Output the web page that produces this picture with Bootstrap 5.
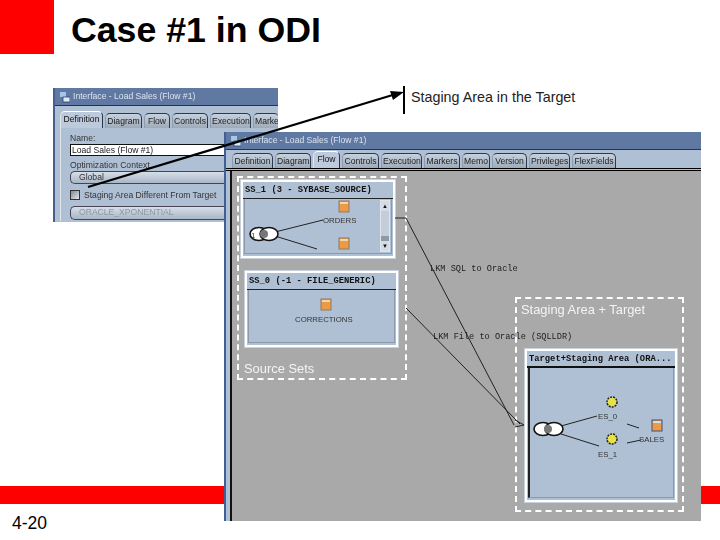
<!DOCTYPE html>
<html lang="en"><head><meta charset="utf-8"><title>Case #1 in ODI</title>
<link href="https://cdn.jsdelivr.net/npm/bootstrap@5.3.0/dist/css/bootstrap.min.css" rel="stylesheet">
<style>
html,body{margin:0;background:#fff;overflow:hidden}
.slide{position:relative;width:720px;height:540px;overflow:hidden;font-family:"Liberation Sans",Arial,sans-serif;color:#000}
.redsq{position:absolute;left:0;top:0;width:54px;height:54px;background:#f00}
.ttl{position:absolute;left:71px;top:10px;margin:0;font:700 35.7px/40px "Liberation Sans",sans-serif}
.redbar{position:absolute;left:0;top:486px;width:720px;height:18px;background:#f00}
.pgno{position:absolute;left:12px;top:512px;font-size:17.5px;line-height:22px}
.callout{position:absolute;left:411px;top:89px;font-size:14.3px;line-height:16px;color:#222}
.win{position:absolute;background:#b0c0d4;overflow:hidden;font-size:8.6px;line-height:12px;color:#333;filter:blur(.4px)}
.win-back{left:53px;top:88px;width:225px;height:134px;border-left:2px solid #465f8d}
.win-front{left:224px;top:132px;width:477px;height:389px;border-left:2px solid #3f5f96}
.tbar{height:18px;background:#6079a3;border-bottom:1px solid #20345a;color:#dbe3ee;padding-left:5px;line-height:17px;white-space:nowrap;font-size:8.6px;display:flex;align-items:center;gap:3px}
.tabstrip{display:flex;align-items:flex-end;gap:2px;white-space:nowrap}
.win-front .tabstrip{padding-left:6px;height:18px;border-bottom:3px double #000;box-sizing:content-box}
.win-back .tabstrip{padding-left:5px;height:22px}
.tabx{height:15px;padding:0 1px;line-height:14px;text-align:center;background:linear-gradient(#c6d1de,#9eaab8);border:1px solid #2b3a4f;border-bottom:0;border-radius:5px 5px 0 0;border-left-color:#8d9bad;color:#222;flex:none;overflow:hidden}
.tabx.on{background:#bccadb;height:17px;border-color:#fff #26384f transparent #dfe6ee;color:#111}
.formx{padding:4px 9px 0;display:flex;flex-direction:column;position:relative;height:93px;border-left:1px solid #dfe6ee;margin-left:5px}
.txtfield{height:12px;width:180px;background:#fff;border:1px solid #111;line-height:10px;padding-left:1px;color:#222;flex:none}
.pill{height:13px;width:180px;background:linear-gradient(#d7dfe8,#a9b6c6);border:1px solid #445;border-right:0;border-radius:5px 0 0 5px;padding-left:8px;line-height:11px;flex:none}
.gapa{margin-top:3px}.gapb{margin-top:5px}
.chk{width:10px;height:10px;flex:none;background:linear-gradient(135deg,#7f8894,#e4e8ed);border:1px solid #333}
.canvasx{position:relative;background:#a9a9a9;height:350px;margin-left:4px;border-left:2px solid #111}
.dashbox{position:absolute;border:2px dashed #fff}
.dash-src{left:5px;top:5px;width:170px;height:204px}
.dash-stg{left:283px;top:126px;width:169px;height:215px}
.lbl-w{position:absolute;color:#f4f4f4;font-size:12.9px;line-height:14px;white-space:nowrap}
.panelx{position:absolute;background:#b0c0d4;border:2px solid #fff;outline:1px solid #c8d2de}
.pan-h{height:17px;font:700 8.8px/17px "Liberation Mono",monospace;color:#111;padding-left:2px;white-space:nowrap;overflow:hidden;border-bottom:1px solid #222}
.pan-b{position:relative;height:calc(100% - 19px);background:#b0c0d4;border:1px solid #8b99aa;border-top:0;margin:0 1px;overflow:hidden}
.scrollx{position:absolute;right:1px;top:1px;bottom:1px;width:10px;background:#8e99a6;border:1px solid #dfe5ec}
.thumbx{position:absolute;left:0;right:0;top:10px;height:25px;background:#c4ced9}
.arrowx{position:absolute;left:0;right:0;height:10px;background:#d3dbe4;color:#111;font-size:6px;line-height:10px;text-align:center}
.nodet{position:absolute;font-size:7.8px;line-height:10px;color:#333;white-space:nowrap}
.lkm{position:absolute;font:8.6px/10px "Liberation Mono",monospace;color:#222;white-space:nowrap}
.ovl{position:absolute;left:0;top:0;pointer-events:none}
.dgm{position:absolute;overflow:visible}
</style></head><body>
<div class="slide">
  <div class="redbar"></div>
  <div class="redsq"></div>
  <h1 class="ttl">Case #1 in ODI</h1>
  <div class="pgno">4-20</div>
  <div class="callout">Staging Area in the Target</div>

  <div class="win win-back">
    <div class="tbar"><svg width="10" height="12" viewBox="0 0 10 12"><rect x="0" y="1" width="6" height="5" fill="#a8c4e6"/><rect x="3" y="6" width="7" height="5" fill="#dfe8f3" stroke="#27456f" stroke-width=".8"/></svg><span>Interface - Load Sales (Flow #1)</span></div>
    <div class="tabstrip">
      <div class="tabx on" style="width:43px">Definition</div><div class="tabx" style="width:37px">Diagram</div><div class="tabx" style="width:26px">Flow</div><div class="tabx" style="width:36px">Controls</div><div class="tabx" style="width:41px">Execution</div><div class="tabx" style="width:26px;border-right:0">Marke</div>
    </div>
    <div class="formx">
      <div>Name:</div>
      <div class="txtfield">Load Sales (Flow #1)</div>
      <div class="gapa">Optimization Context</div>
      <div class="pill">Global</div>
      <div class="d-flex align-items-center gap-1 gapb"><span class="chk"></span><span class="text-nowrap">Staging Area Different From Target</span></div>
      <div class="pill gapb" style="height:14px;color:#8b97a6">ORACLE_XPONENTIAL</div>
    </div>
  </div>

  <div class="win win-front">
    <div class="tbar"><svg width="10" height="12" viewBox="0 0 10 12"><rect x="0" y="1" width="6" height="5" fill="#a8c4e6"/><rect x="3" y="6" width="7" height="5" fill="#dfe8f3" stroke="#27456f" stroke-width=".8"/></svg><span>Interface - Load Sales (Flow #1)</span></div>
    <div class="tabstrip">
      <div class="tabx" style="width:41px">Definition</div><div class="tabx" style="width:36px">Diagram</div><div class="tabx on" style="width:27px">Flow</div><div class="tabx" style="width:37px">Controls</div><div class="tabx" style="width:41px">Execution</div><div class="tabx" style="width:36px">Markers</div><div class="tabx" style="width:28px">Memo</div><div class="tabx" style="width:35px">Version</div><div class="tabx" style="width:41px">Privileges</div><div class="tabx" style="width:44px">FlexFields</div>
    </div>
    <div class="canvasx">
      <div class="panelx" style="left:9px;top:9px;width:154px;height:78px">
        <div class="pan-h">SS_1 (3 - SYBASE_SOURCE)</div>
        <div class="pan-b">
          <svg class="dgm" style="left:0;top:0" width="150" height="60" viewBox="0 0 150 60">
            <path d="M30 33 78 21M30 37 72 50" stroke="#222" fill="none"/>
            <rect x="94" y="2" width="10" height="11" fill="#ee9a45" stroke="#8a7a66"/><rect x="95" y="3" width="8" height="2" fill="#f6d6a8"/>
            <rect x="94" y="39" width="10" height="11" fill="#ee9a45" stroke="#8a7a66"/><rect x="95" y="40" width="8" height="2" fill="#f6d6a8"/>
            <ellipse cx="14" cy="35" rx="9" ry="6.5" fill="#fff" stroke="#111" stroke-width="1.6"/><ellipse cx="24" cy="35" rx="9" ry="6.5" fill="#fff" stroke="#111" stroke-width="1.6"/><circle cx="19" cy="35" r="4" fill="#777"/>
          </svg>
          <div class="nodet" style="left:78px;top:17px">ORDERS</div>
          <div class="nodet" style="left:6px;top:32px">1</div>
          <div class="scrollx"><div class="arrowx" style="top:0">▲</div><div class="thumbx"></div><div class="arrowx" style="bottom:0">▼</div></div>
        </div>
      </div>
      <div class="panelx" style="left:13px;top:100px;width:153px;height:76px">
        <div class="pan-h">SS_0 (-1 - FILE_GENERIC)</div>
        <div class="pan-b">
          <svg class="dgm" style="left:0;top:0" width="150" height="50" viewBox="0 0 150 50">
            <rect x="72" y="9" width="10" height="11" fill="#ee9a45" stroke="#8a7a66"/><rect x="73" y="10" width="8" height="2" fill="#f6d6a8"/>
          </svg>
          <div class="nodet" style="left:46px;top:25px">CORRECTIONS</div>
        </div>
      </div>
      <div class="dashbox dash-src"></div>
      <div class="lbl-w" style="left:12px;top:191px">Source Sets</div>
      <div class="lkm" style="left:198px;top:93px">LKM SQL to Oracle</div>
      <div class="lkm" style="left:201px;top:161px">LKM File to Oracle (SQLLDR)</div>
      <div class="dashbox dash-stg"></div>
      <div class="lbl-w" style="left:289px;top:132px">Staging Area + Target</div>
      <div class="panelx" style="left:293px;top:178px;width:152px;height:153px">
        <div class="pan-h" style="border-bottom:2px solid #111">Target+Staging Area (ORA...</div>
        <div class="pan-b" style="border-left:2px solid #222">
          <svg class="dgm" style="left:0;top:0" width="148" height="132" viewBox="0 0 148 132">
            <path d="M31 58 67 48M31 66 69 78M97 56 109 60M97 75 111 72" stroke="#222" fill="none"/>
            <ellipse cx="13" cy="61" rx="9" ry="6.5" fill="#fff" stroke="#111" stroke-width="1.6"/><ellipse cx="24" cy="61" rx="9" ry="6.5" fill="#fff" stroke="#111" stroke-width="1.6"/><circle cx="18" cy="61" r="4" fill="#777"/>
            <circle cx="82" cy="34" r="5" fill="#e8e24a" stroke="#222" stroke-dasharray="2 1" stroke-width="1.5"/>
            <circle cx="82" cy="71" r="5" fill="#e8e24a" stroke="#222" stroke-dasharray="2 1" stroke-width="1.5"/>
            <rect x="122" y="52" width="10" height="11" fill="#ee9a45" stroke="#39547c"/><rect x="123" y="53" width="8" height="2" fill="#cfe0f2"/>
          </svg>
          <div class="nodet" style="left:68px;top:44px">ES_0</div>
          <div class="nodet" style="left:109px;top:67px">SALES</div>
          <div class="nodet" style="left:68px;top:82px">ES_1</div>
        </div>
      </div>
      <svg class="ovl" width="475" height="350" viewBox="232 172 475 350">
        <path d="M395 219H406L514 426M406 309 520 425" stroke="#222" fill="none"/>
        <path d="M515 421 524 426 515 428" stroke="#222" fill="none"/>
      </svg>
    </div>
  </div>

  <svg class="ovl" width="720" height="540" viewBox="0 0 720 540">
    <path d="M88 187 396 94" stroke="#000" stroke-width="2.2" fill="none"/>
    <path d="M404 92 390 91 393 100Z" fill="#000"/>
    <path d="M404 86V114" stroke="#000" stroke-width="2"/>
  </svg>
</div>
</body></html>
